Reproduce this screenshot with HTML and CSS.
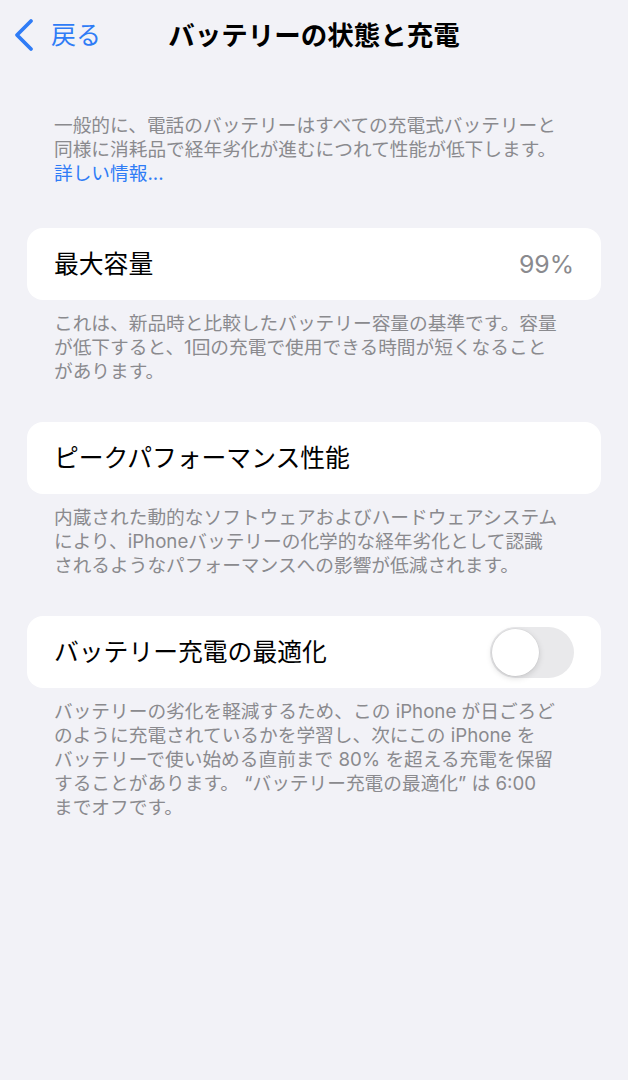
FILE: index.html
```html
<!DOCTYPE html>
<html lang="ja">
<head>
<meta charset="utf-8">
<title>バッテリーの状態と充電</title>
<link rel="stylesheet" href="styles.css">
</head>
<body>
<header class="nav">
  <a class="back" href="#">
    <svg class="chevron" width="22" height="34" viewBox="0 0 22 34" aria-hidden="true">
      <path d="M18 3 L4 17 L18 31" fill="none" stroke="currentColor" stroke-width="3.8" stroke-linecap="round" stroke-linejoin="round"/>
    </svg>
    <span class="back-label">戻る</span>
  </a>
  <h1 class="title">バッテリーの状態と充電</h1>
  <span class="nav-spacer"></span>
</header>

<main class="content">
  <p class="note intro">一般的に、電話のバッテリーはすべての充電式バッテリーと<br>同様に消耗品で経年劣化が進むにつれて性能が低下します。<br><a class="link" href="#">詳しい情報...</a></p>

  <section class="group">
    <div class="card">
      <span class="label">最大容量</span>
      <span class="value">99%</span>
    </div>
    <p class="note">これは、新品時と比較したバッテリー容量の基準です。容量<br>が低下すると、1回の充電で使用できる時間が短くなること<br>があります。</p>
  </section>

  <section class="group">
    <div class="card">
      <span class="label">ピークパフォーマンス性能</span>
    </div>
    <p class="note">内蔵された動的なソフトウェアおよびハードウェアシステム<br>により、iPhoneバッテリーの化学的な経年劣化として認識<br>されるようなパフォーマンスへの影響が低減されます。</p>
  </section>

  <section class="group">
    <div class="card">
      <span class="label">バッテリー充電の最適化</span>
      <span class="switch"><span class="knob"></span></span>
    </div>
    <p class="note">バッテリーの劣化を軽減するため、この iPhone が日ごろど<br>のように充電されているかを学習し、次にこの iPhone を<br>バッテリーで使い始める直前まで 80% を超える充電を保留<br>することがあります。 “バッテリー充電の最適化” は 6:00<br>までオフです。</p>
  </section>
</main>
</body>
</html>
```

FILE: styles.css
```css
html, body {
  margin: 0;
  padding: 0;
}

body {
  background: #f2f2f7;
  font-family: Inter, "Noto Sans CJK JP", sans-serif;
  color: #000;
  width: 628px;
  min-height: 1080px;
}

.nav {
  height: 70px;
  display: grid;
  grid-template-columns: 1fr auto 1fr;
  align-items: center;
}

.back {
  display: flex;
  align-items: center;
  color: #2f7cf6;
  text-decoration: none;
  padding-left: 13px;
}

.chevron {
  display: block;
  margin-right: 16px;
}

.back-label {
  font-size: 25px;
  line-height: 30px;
}

.title {
  margin: 0;
  font-size: 26.5px;
  font-weight: 700;
  line-height: 32px;
  letter-spacing: 0;
}

.content {
  padding: 0 27px;
}

.note {
  margin: 12px 0 0;
  padding: 0 27px;
  font-size: 18.7px;
  line-height: 24px;
  color: #8a8a8e;
  white-space: nowrap;
}

.intro {
  margin-top: 44px;
  margin-bottom: 42px;
}

.link {
  color: #2f7cf6;
  text-decoration: none;
}

.group {
  margin-bottom: 38px;
}

.card {
  background: #fff;
  border-radius: 16px;
  height: 72px;
  padding: 0 27px;
  display: flex;
  align-items: center;
  justify-content: space-between;
}

.label {
  font-size: 24.8px;
  line-height: 30px;
}

.value {
  font-size: 24.8px;
  line-height: 30px;
  color: #8a8a8e;
}

.switch {
  position: relative;
  width: 84px;
  height: 51px;
  border-radius: 26px;
  background: #e9e9eb;
  flex: none;
}

.knob {
  position: absolute;
  left: 2px;
  top: 2px;
  width: 47px;
  height: 47px;
  border-radius: 50%;
  background: #fff;
  box-shadow: 0 2px 6px rgba(0, 0, 0, 0.15), 0 0 0 0.5px rgba(0, 0, 0, 0.06);
}
```
